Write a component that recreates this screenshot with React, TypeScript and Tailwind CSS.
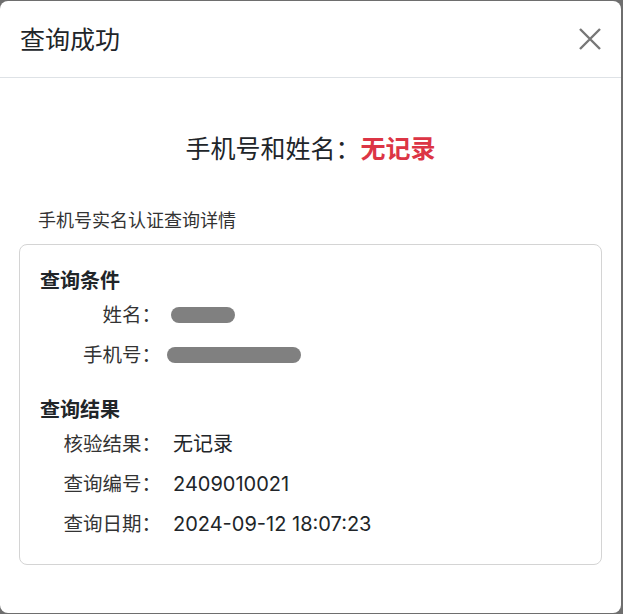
const Row = ({ label, children }: { label: string; children: React.ReactNode }) => (
  <div className="flex h-[40px] items-center">
    <div className="w-[121px] text-right text-[19.5px] text-[#333]">{label}：</div>
    <div className="ml-[12px] flex items-center font-['Inter','Noto_Sans_CJK_SC',sans-serif] text-[20px]">{children}</div>
  </div>
);

const Masked = ({ w, shift }: { w: number; shift: number }) => (
  <span
    className="block h-[16px] rounded-full bg-[#808080]"
    style={{ width: w, marginLeft: shift }}
  />
);

const App = () => {
  return (
    <div className="h-[614px] w-[623px] bg-[#6e6e6e] pb-px pr-[2px] pt-px font-['Noto_Sans','Noto_Sans_CJK_SC',sans-serif] text-[#212529]">
      <div className="flex h-full flex-col rounded-lg bg-white">
        {/* header */}
        <div className="flex h-[77px] items-center justify-between border-b border-[#dee2e6] pl-5 pr-[18px]">
          <h5 className="text-[25px] leading-none">查询成功</h5>
          <button className="flex h-[26px] w-[26px] items-center justify-center text-[#777]">
            <svg width="24" height="24" viewBox="0 0 24 24" fill="none" stroke="currentColor" strokeWidth="2.4">
              <path d="M2 2L22 22M22 2L2 22" />
            </svg>
          </button>
        </div>

        <div className="px-[19px]">
          <p className="mt-[52px] text-center text-[25px] leading-[36px]">
            手机号和姓名：<span className="font-bold text-[#dc3545]">无记录</span>
          </p>

          <p className="mt-[41px] pl-[19px] text-[18px] leading-[27px] text-[#333]">手机号实名认证查询详情</p>

          <div className="mt-[10px] rounded-lg border border-[#d4d4d4] px-5 pb-[20px] pt-[22px]">
            <h6 className="text-[20px] font-bold leading-[28px]">查询条件</h6>
            <Row label="姓名">
              <Masked w={64} shift={-2} />
            </Row>
            <Row label="手机号">
              <Masked w={134} shift={-6} />
            </Row>

            <h6 className="mt-[21px] text-[20px] font-bold leading-[28px]">查询结果</h6>
            <Row label="核验结果">无记录</Row>
            <Row label="查询编号">2409010021</Row>
            <Row label="查询日期">2024-09-12 18:07:23</Row>
          </div>
        </div>
      </div>
    </div>
  );
};

export default App;
